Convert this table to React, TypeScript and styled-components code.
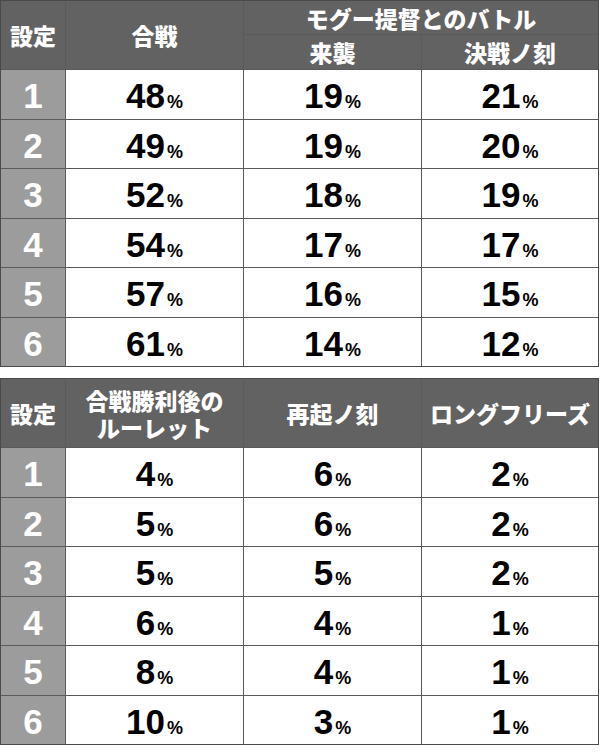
import React from "react";
import styled, { createGlobalStyle } from "styled-components";

const Global = createGlobalStyle`
  html, body { margin: 0; padding: 0; background: #ffffff; }
  body { width: 600px; height: 754px; overflow: hidden; }
`;

const Page = styled.div`
  display: flex;
  flex-direction: column;
  gap: 11px;
  width: 600px;
`;

const Grid = styled.div<{ $rows: string }>`
  display: grid;
  grid-template-columns: 64px 177px 177px 176px;
  grid-template-rows: ${(p) => p.$rows};
  gap: 1px;
  width: max-content;
  background: #5a5a5a;
  border: 1px solid #4a4a4a;
`;

const Head = styled.div<{ $col?: string; $row?: string }>`
  grid-column: ${(p) => p.$col || "auto"};
  grid-row: ${(p) => p.$row || "auto"};
  background: #626262;
  color: #ffffff;
  display: flex;
  flex-direction: column;
  align-items: center;
  justify-content: center;
  gap: 1px;
  text-align: center;
  font-family: "Noto Sans CJK JP", "Noto Sans", sans-serif;
  font-weight: 900;
  font-size: 23px;
  line-height: 26px;
  white-space: nowrap;
`;

const HeadLine = styled.span`
  display: block;
`;

const SetCell = styled.div`
  background: #9c9c9c;
  color: #ffffff;
  display: flex;
  align-items: center;
  justify-content: center;
  padding-top: 3px;
  box-sizing: border-box;
  font-family: "Liberation Sans", Arial, sans-serif;
  font-weight: 700;
  font-size: 35px;
  line-height: 1;
`;

const DataCell = styled.div`
  background: #ffffff;
  color: #000000;
  display: flex;
  align-items: baseline;
  justify-content: center;
  padding-top: 8px;
  box-sizing: border-box;
  font-family: "Liberation Sans", Arial, sans-serif;
  font-weight: 700;
  line-height: 1;
`;

const Num = styled.span`
  font-size: 35px;
`;

const Pct = styled.span`
  font-size: 18px;
  margin-left: 2px;
`;

type Row = [number, number, number, number];

const table1: Row[] = [
  [1, 48, 19, 21],
  [2, 49, 19, 20],
  [3, 52, 18, 19],
  [4, 54, 17, 17],
  [5, 57, 16, 15],
  [6, 61, 14, 12],
];

const table2: Row[] = [
  [1, 4, 6, 2],
  [2, 5, 6, 2],
  [3, 5, 5, 2],
  [4, 6, 4, 1],
  [5, 8, 4, 1],
  [6, 10, 3, 1],
];

const Value: React.FC<{ v: number }> = ({ v }) => (
  <DataCell>
    <Num>{v}</Num>
    <Pct>%</Pct>
  </DataCell>
);

const Body: React.FC<{ rows: Row[] }> = ({ rows }) => (
  <>
    {rows.map(([s, a, b, c]) => (
      <React.Fragment key={s}>
        <SetCell>{s}</SetCell>
        <Value v={a} />
        <Value v={b} />
        <Value v={c} />
      </React.Fragment>
    ))}
  </>
);

export default function App() {
  return (
    <>
      <Global />
      <Page>
        <Grid $rows="33px 34px repeat(6, 48.5px)">
          <Head $row="1 / span 2">設定</Head>
          <Head $row="1 / span 2">合戦</Head>
          <Head $col="3 / span 2">モグー提督とのバトル</Head>
          <Head $col="3" $row="2">来襲</Head>
          <Head $col="4" $row="2">決戦ノ刻</Head>
          <Body rows={table1} />
        </Grid>
        <Grid $rows="68px repeat(6, 48.5px)">
          <Head>設定</Head>
          <Head>
            <HeadLine>合戦勝利後の</HeadLine>
            <HeadLine>ルーレット</HeadLine>
          </Head>
          <Head>再起ノ刻</Head>
          <Head>ロングフリーズ</Head>
          <Body rows={table2} />
        </Grid>
      </Page>
    </>
  );
}
